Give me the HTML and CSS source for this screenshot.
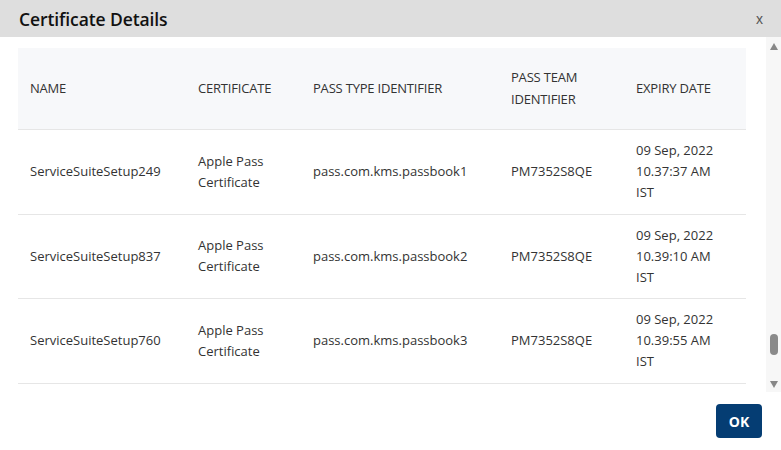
FILE: index.html
```html
<!DOCTYPE html>
<html>
<head>
<meta charset="utf-8">
<link rel="stylesheet" href="styles.css">
</head>
<body>
<div class="dialog">
  <div class="titlebar">
    <div class="title">Certificate Details</div>
    <div class="close">x</div>
  </div>
  <div class="body">
    <div class="content">
      <table class="grid">
        <thead>
          <tr>
            <th>NAME</th>
            <th>CERTIFICATE</th>
            <th>PASS TYPE IDENTIFIER</th>
            <th>PASS TEAM IDENTIFIER</th>
            <th>EXPIRY DATE</th>
          </tr>
        </thead>
        <tbody>
          <tr>
            <td>ServiceSuiteSetup249</td>
            <td>Apple Pass Certificate</td>
            <td>pass.com.kms.passbook1</td>
            <td>PM7352S8QE</td>
            <td>09 Sep, 2022 10.37:37 AM IST</td>
          </tr>
          <tr class="short">
            <td>ServiceSuiteSetup837</td>
            <td>Apple Pass Certificate</td>
            <td>pass.com.kms.passbook2</td>
            <td>PM7352S8QE</td>
            <td>09 Sep, 2022 10.39:10 AM IST</td>
          </tr>
          <tr>
            <td>ServiceSuiteSetup760</td>
            <td>Apple Pass Certificate</td>
            <td>pass.com.kms.passbook3</td>
            <td>PM7352S8QE</td>
            <td>09 Sep, 2022 10.39:55 AM IST</td>
          </tr>
        </tbody>
      </table>
    </div>
    <div class="scrollbar">
      <div class="arrow up"></div>
      <div class="track"><div class="thumb"></div></div>
      <div class="arrow down"></div>
    </div>
  </div>
  <div class="footer">
    <button class="ok">OK</button>
  </div>
</div>
</body>
</html>
```
FILE: styles.css
```css
* { box-sizing: border-box; }
html, body { margin: 0; padding: 0; background: #fff; }
body {
  font-family: "Open Sans", "Noto Sans", sans-serif;
  color: #333;
  width: 781px;
  height: 450px;
  overflow: hidden;
}
.dialog { display: flex; flex-direction: column; height: 450px; }
.titlebar {
  height: 37px;
  background: #dedede;
  display: flex;
  align-items: center;
  justify-content: space-between;
  padding: 0 18px 0 19px;
}
.title {
  font-size: 17.5px;
  font-weight: 600;
  color: #111;
  letter-spacing: -0.1px;
}
.close {
  font-size: 14px;
  color: #555;
  font-family: "Liberation Sans", sans-serif;
}
.body {
  height: 355px;
  display: flex;
}
.content {
  flex: 1;
  padding: 11px 21px 0 18px;
  overflow: hidden;
}
.grid {
  width: 728px;
  border-collapse: collapse;
  font-size: 13px;
  color: #333;
}
.grid th {
  background: #f7f8fa;
  font-weight: 400;
  text-align: left;
  height: 81px;
  line-height: 22px;
  padding: 0 12px;
  border-bottom: 1px solid #e6e6e6;
  letter-spacing: -0.2px;
}
.grid td {
  height: 85px;
  line-height: 21px;
  padding: 0 12px;
  border-bottom: 1px solid #e6e6e6;
}
.grid tr.short td { height: 84px; }
.grid th:nth-child(1), .grid td:nth-child(1) { width: 168px; }
.grid th:nth-child(2), .grid td:nth-child(2) { width: 115px; }
.grid th:nth-child(3), .grid td:nth-child(3) { width: 198px; }
.grid th:nth-child(4), .grid td:nth-child(4) { width: 125px; }
.grid th:nth-child(5), .grid td:nth-child(5) { width: 122px; padding-right: 24px; }
.scrollbar {
  width: 15px;
  background: #f7f7f7;
  display: flex;
  flex-direction: column;
  align-items: center;
}
.arrow { width: 0; height: 0; }
.arrow.up {
  margin-top: 6px;
  border-left: 4px solid transparent;
  border-right: 4px solid transparent;
  border-bottom: 7px solid #888;
}
.arrow.down {
  margin-bottom: 4px;
  border-left: 4px solid transparent;
  border-right: 4px solid transparent;
  border-top: 7px solid #888;
}
.track {
  flex: 1;
  width: 100%;
  display: flex;
  justify-content: center;
  align-items: flex-end;
  padding-bottom: 26px;
}
.thumb {
  width: 8px;
  height: 21px;
  border-radius: 4px;
  background: #8a8a8a;
}
.footer {
  flex: 1;
  display: flex;
  justify-content: flex-end;
  align-items: flex-start;
  padding: 12px 19px 0 0;
}
.ok {
  width: 46px;
  height: 34px;
  border: none;
  border-radius: 4px;
  background: #053d73;
  color: #fff;
  font-family: "Open Sans", sans-serif;
  font-weight: 700;
  font-size: 14px;
  padding: 0;
}
```
